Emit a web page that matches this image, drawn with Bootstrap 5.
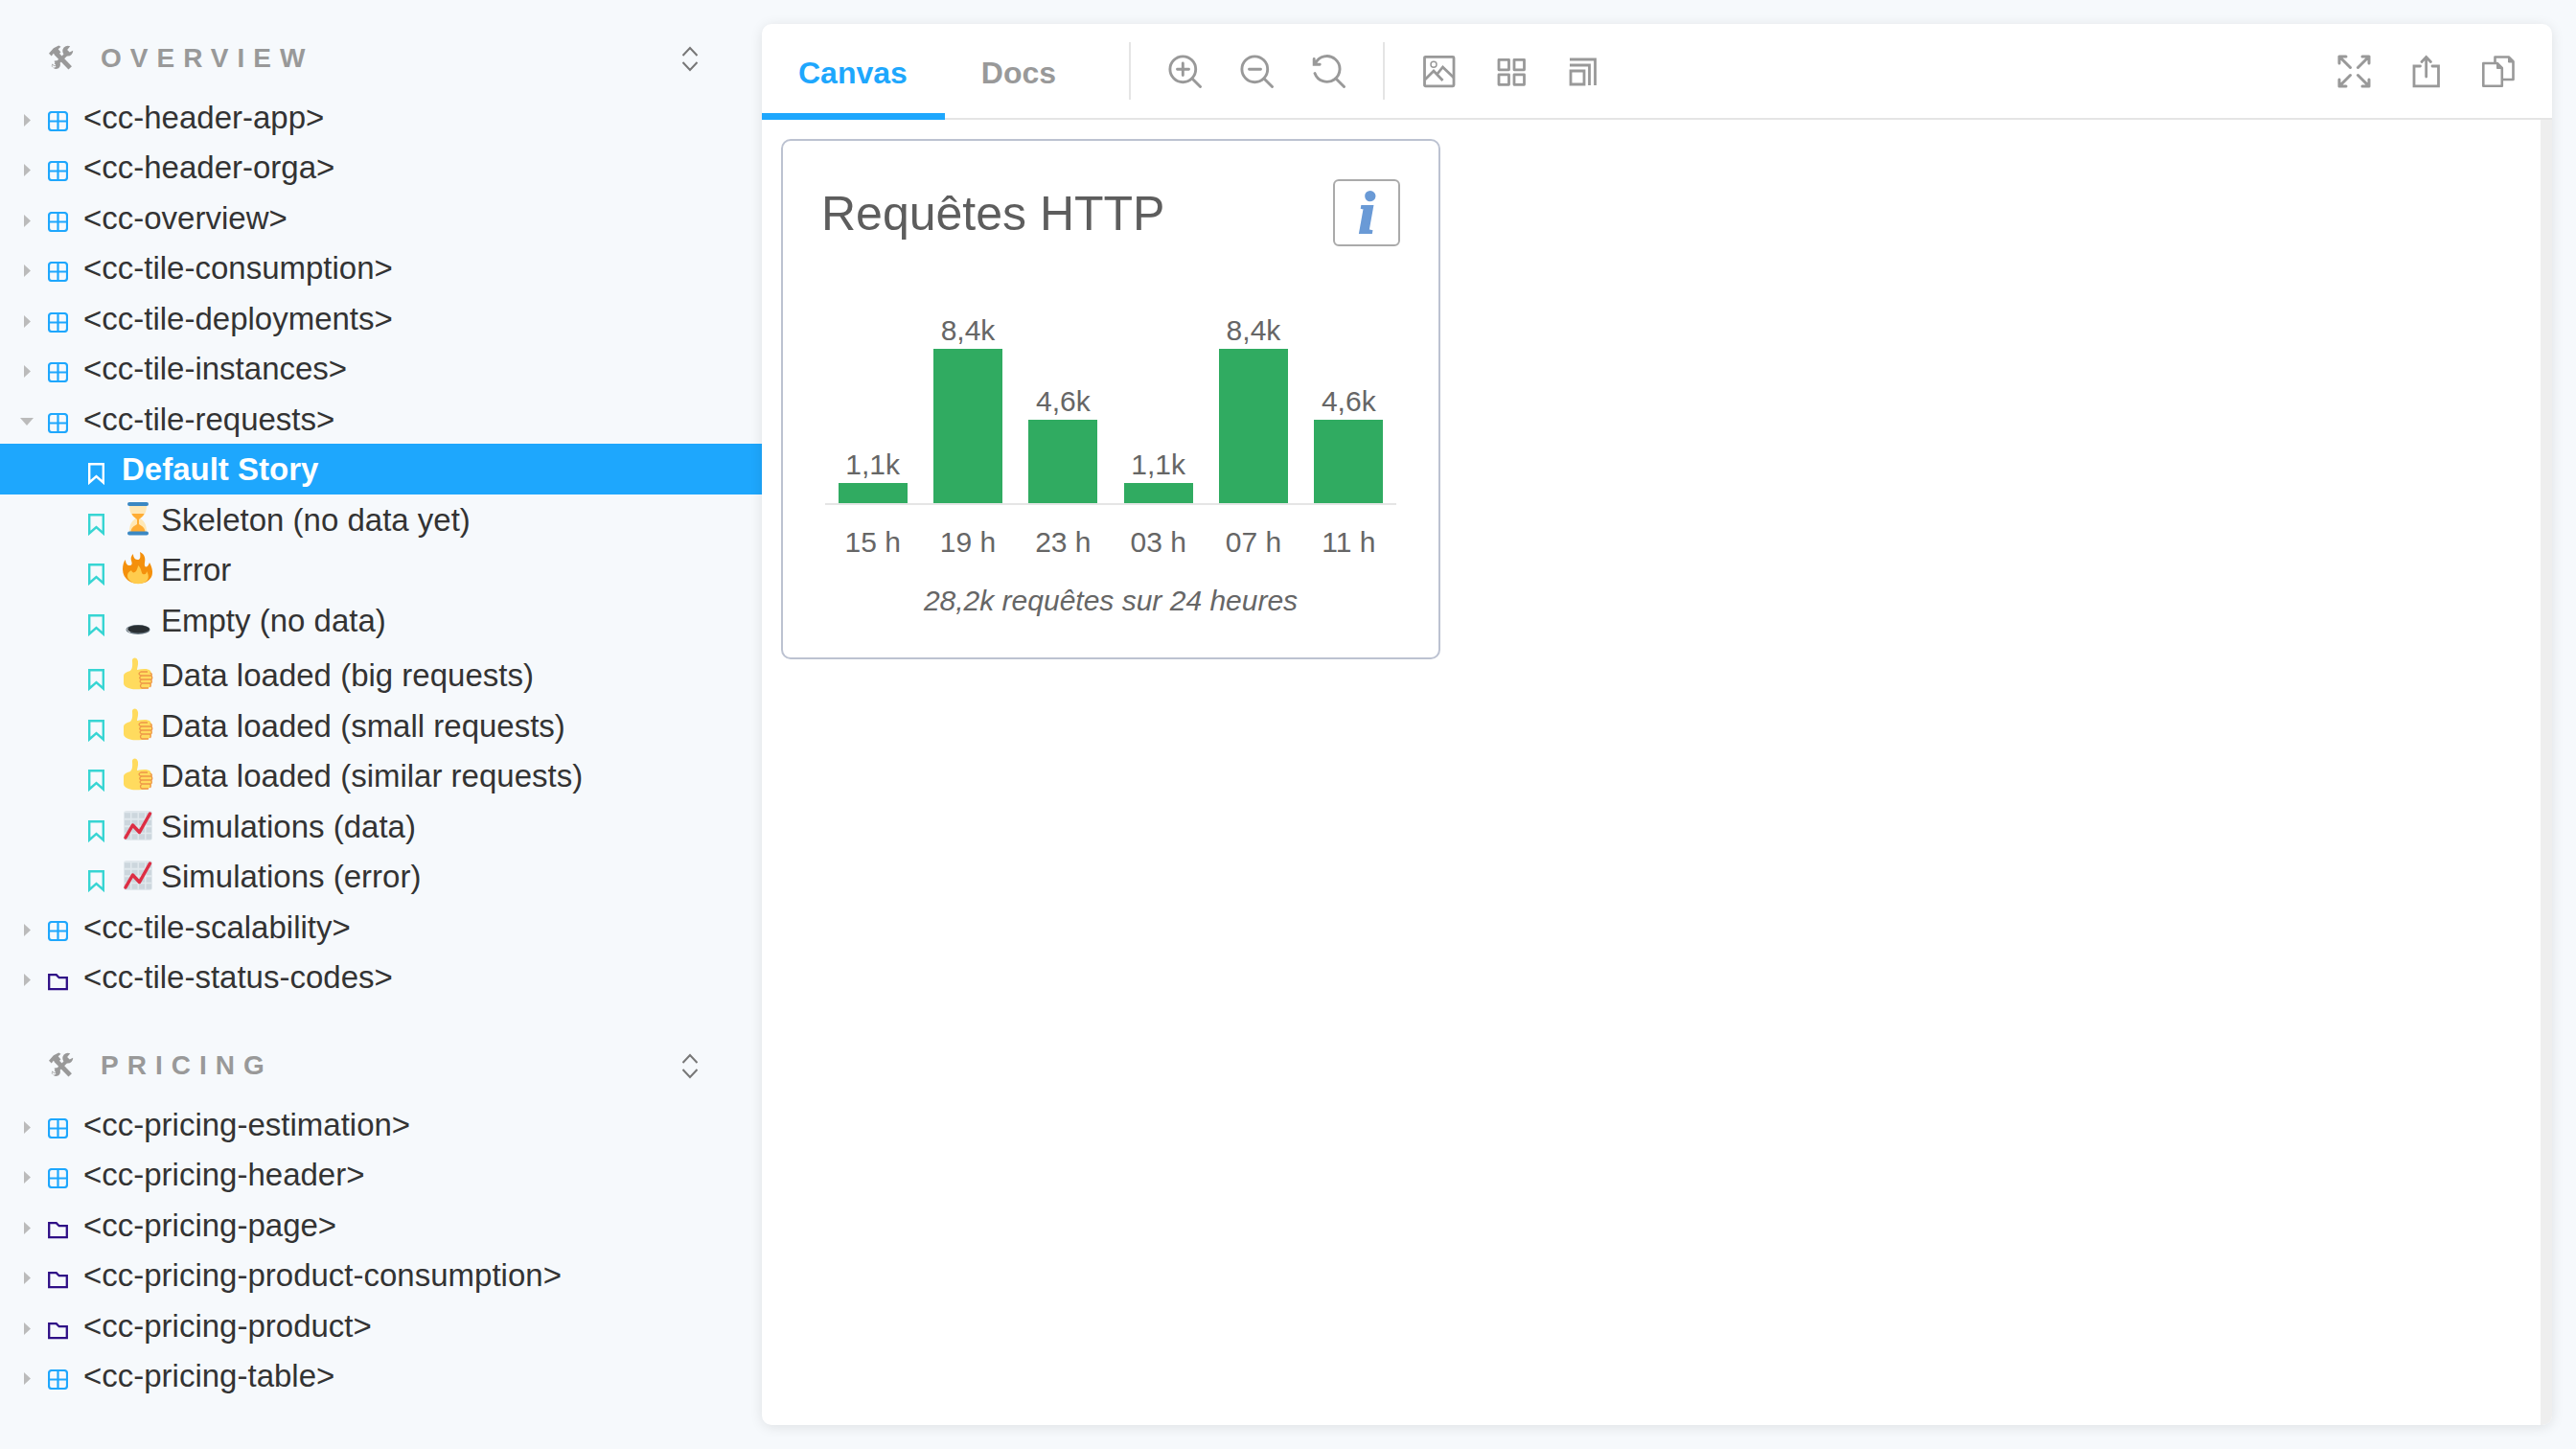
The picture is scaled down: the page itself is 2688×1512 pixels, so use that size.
<!DOCTYPE html>
<html lang="fr">
<head>
<meta charset="utf-8">
<meta name="viewport" content="width=device-width, initial-scale=1">
<title>cc-tile-requests - Default Story</title>
<link href="https://cdn.jsdelivr.net/npm/bootstrap@5.3.0/dist/css/bootstrap.min.css" rel="stylesheet">
<style>
body{font-family:"Liberation Sans",Arial,sans-serif;background:#f6f9fc;color:#333;font-size:33px}
.sidebar{width:795px}
.section-head{height:70px;padding:21px 65px 0 51px;color:#999;font-size:28px;line-height:28px}
.section-head h2{font-size:28px;font-weight:700;letter-spacing:9px;line-height:28px}
.section-top{padding-top:26px}
.section-next{margin-top:31px}
.toggle-all{width:20px;height:28px;color:#777}
.tree-item a{display:flex;align-items:flex-start;height:52px;line-height:54px;color:#333;text-decoration:none;white-space:nowrap;padding-left:20px}
.tree-item:nth-child(even) a{height:53px}
.tree-item.tall a{height:57px}
.tree-item .arrow{width:16px;height:13px;margin:23px 14px 0 0;flex:none}
.tree-item .kind{width:21px;height:21px;margin:20px 16px 0 0;flex:none}
.tree-item.story a{padding-left:92px}
.tree-item.story .kind{width:17px;height:23px;margin-right:18px;color:#37d5d3}
.tree-item.story .emoji{width:32px;height:36px;margin:7px 8px 0 1px;flex:none}
.tree-item.active a{background:#1ea7fd;color:#fff;font-weight:700}
.tree-item.story.active .kind{color:#fff}
.c-blue{color:#1ea7fd}
.c-violet{color:#2f0f86}
.preview{margin:25px 25px 25px 0;background:#fff;border-radius:10px;box-shadow:0 2px 13px rgba(0,0,0,.1)}
.toolbar{height:100px;border-bottom:2px solid #e5e5e5}
.tab-link{height:100px;padding:10px 39px 0 38px;border-bottom:7px solid transparent;color:#999;font-size:32px;font-weight:700;line-height:82px;text-decoration:none}
.tab-link.active{color:#1ea7fd;border-color:#1ea7fd}
.sep{width:2px;height:60px;margin:0 39px;background:#e5e5e5}
.sep-first{margin-left:37px}
.tools{gap:40px}
.tools button{width:35px;height:35px;color:#999}
.tools svg,.toggle-all svg{display:block;width:100%;height:100%}
.end-tools{padding-right:39px}
.stage{padding:20px;border-right:12px solid #eee}
.tile{width:688px;padding:40px;border:2px solid #bcc2d1;border-radius:10px;color:#666;font-size:30px}
.tile h1{font-size:50px;line-height:72px;font-weight:400;color:#5d5d5d}
.info-btn{width:70px;height:70px;border:2px solid #aaa;border-radius:6px;background:#fff;color:#6a9ad6;font:italic 700 62px/62px "Liberation Serif",serif;-webkit-text-stroke:2px #6a9ad6}
.plot{height:228px;margin:38px 4px 0;border-bottom:2px solid #e5e5e5;box-sizing:content-box}
.plot,.ticks,.total{line-height:38px}
.bar{width:72px;background:#30ab61}
.ticks{margin:20px 4px 0}
.total{margin-top:23px}
</style>
<script src="https://cdn.jsdelivr.net/npm/bootstrap@5.3.0/dist/js/bootstrap.bundle.min.js"></script>
</head>
<body class="d-flex vh-100 overflow-hidden">
<svg class="d-none" aria-hidden="true">
<symbol id="right" viewBox="0 0 16 13"><path d="M5 0l7 6.500L5 13z" fill="#bbb"/></symbol>
<symbol id="down" viewBox="0 0 16 13"><path d="M1 2h14L8 10z" fill="#bbb"/></symbol>
<symbol id="component" viewBox="0 0 21 21"><path d="M4 1h13q3 0 3 3v13q0 3-3 3H4q-3 0-3-3V4q0-3 3-3zM10.500 1v19M1 10.500h19" fill="none" stroke="currentColor" stroke-width="2.200"/></symbol>
<symbol id="folder" viewBox="0 0 21 21"><path d="M1.200 4.200h7.500l3 3h8.100v12H1.200z" fill="none" stroke="currentColor" stroke-width="2.300"/></symbol>
<symbol id="bookmark" viewBox="0 0 17 23"><path d="M1.200 1.200h14.600v19.300l-7.300-6.500-7.300 6.500z" fill="none" stroke="currentColor" stroke-width="2.400"/></symbol>
<symbol id="tools" viewBox="0 0 24 24"><path d="M6.500 7.500L20.500 22" stroke="#999" stroke-width="4.500"/><path d="M0 8l4.500-5 5-2.500 2 1-2.500 2.500 2.500 3L7.500 10.500 4.500 8 2.500 10.500z" fill="#999"/><path d="M18 7.500L6.500 19" stroke="#999" stroke-width="3.500"/><path d="M20.500 1.200a5 5 0 1 0 2.700 4L20 7l-2.300-2.300zM5 15.500a4 4 0 1 1-2 3.500l2.500 1.500 1.500-2zM3 18l-.5 2.500 2.500 1.500 2-1" fill="#999"/></symbol>
<symbol id="updown" viewBox="0 0 20 28"><path d="M2.500 11L10 3l7.500 8M2.500 18L10 26l7.500-8" fill="none" stroke="currentColor" stroke-width="2"/></symbol>
<symbol id="hourglass" viewBox="0 0 32 36"><path d="M7 4h18c0 7-2 11-6.500 14C23 21 25 25 25 32H7c0-7 2-11 6.500-14C9 15 7 11 7 4z" fill="#ffe8b6"/><path d="M9.500 13h13c-1 3-4 4-5.500 6v5c3 2 6 3 6.500 8h-15c.5-5 3.500-6 6.500-8v-5c-1.500-2-4.500-3-5.500-6z" fill="#ffac33"/><path d="M7 3h18M7 33.500h18" stroke="#3b88c3" stroke-width="4" stroke-linecap="round"/></symbol>
<symbol id="fire" viewBox="0 0 32 36"><path d="M0 19c0-4 1-8 3-10 0 4 2 6 4 6 3 0 3-2 2-5s0-5 2-7c0 5 3 6 5 6s3-2 2-8c5 2 6 7 5 11-1 6 3 6 5 0 3 5 4 11 2 15-3 5-8 7-14 7S0 30 0 19z" fill="#f4900c"/><path d="M5 26c0-4 3-5 4-6 1 3 3 3 5 1 1-2 2-4 2-6 4 3 3 8 5 9 3 1 4-1 4-3 3 5 2 9-1 11-5 3-11 3-15 0-3-2-4-4-4-6z" fill="#ffcc4d"/></symbol>
<symbol id="hole" viewBox="0 0 32 36"><ellipse cx="16" cy="29" rx="12.500" ry="5" fill="#66757f"/><ellipse cx="16.500" cy="28.500" rx="11.500" ry="4" fill="#292f33"/><path d="M5.500 27.500q-2 2 2.500 4.500" fill="none" stroke="#ddd"/></symbol>
<symbol id="thumb" viewBox="0 0 32 36"><path d="M1 20q0-3 7-5c3-3 2-8 2-11 0-3 5-4 6 1 .5 4-1 7-1 9 5-1 11-2 14 1 2 4 2 12 0 16q-2 3-8 3c-6 0-10 1-15-1Q1 31 1 28z" fill="#ffdb5e"/><path d="M26 16h-7q-4 2 0 4h11M20 20q-4 2-1 4h11M20 24q-4 2 0 4h9M20 28q-3 3 0 5h7M29.500 20q2-2-1-3M30 24q1.500-1.500 0-4M29.500 28q1.500-1.500 0-4M28.500 32q1.500-2 0-4" fill="none" stroke="#ee9547" stroke-width="1.300"/></symbol>
<symbol id="trend" viewBox="0 0 32 36"><rect x="1" y="3" width="30" height="31" rx="3" fill="#e1e8ed"/><path d="M2 8h28M2 15.500h28M2 23h28M2 30h28" stroke="#ccd6dd" stroke-width="5.500" stroke-dasharray="6 1.500"/><path d="M3 31l7.500-13 7 7.500L28.500 6" fill="none" stroke="#dd2e44" stroke-width="3.500" stroke-linecap="round" stroke-linejoin="round"/></symbol>
</svg>

<nav class="sidebar flex-shrink-0" aria-label="Stories">
<section class="section-top">
<div class="section-head d-flex align-items-start">
<svg width="26" height="26" class="flex-shrink-0"><use href="#tools"/></svg>
<h2 class="mb-0 flex-grow-1 ps-4 ms-1">OVERVIEW</h2>
<button type="button" class="btn p-0 border-0 toggle-all" aria-label="Expand all overview"><svg><use href="#updown"/></svg></button>
</div>
<ul class="list-unstyled mb-0">
<li class="tree-item"><a href="#"><svg class="arrow"><use href="#right"/></svg><svg class="kind c-blue"><use href="#component"/></svg>&lt;cc-header-app&gt;</a></li>
<li class="tree-item"><a href="#"><svg class="arrow"><use href="#right"/></svg><svg class="kind c-blue"><use href="#component"/></svg>&lt;cc-header-orga&gt;</a></li>
<li class="tree-item"><a href="#"><svg class="arrow"><use href="#right"/></svg><svg class="kind c-blue"><use href="#component"/></svg>&lt;cc-overview&gt;</a></li>
<li class="tree-item"><a href="#"><svg class="arrow"><use href="#right"/></svg><svg class="kind c-blue"><use href="#component"/></svg>&lt;cc-tile-consumption&gt;</a></li>
<li class="tree-item"><a href="#"><svg class="arrow"><use href="#right"/></svg><svg class="kind c-blue"><use href="#component"/></svg>&lt;cc-tile-deployments&gt;</a></li>
<li class="tree-item"><a href="#"><svg class="arrow"><use href="#right"/></svg><svg class="kind c-blue"><use href="#component"/></svg>&lt;cc-tile-instances&gt;</a></li>
<li class="tree-item"><a href="#"><svg class="arrow"><use href="#down"/></svg><svg class="kind c-blue"><use href="#component"/></svg>&lt;cc-tile-requests&gt;</a></li>
<li class="tree-item story active"><a href="#" aria-current="page"><svg class="kind"><use href="#bookmark"/></svg>Default Story</a></li>
<li class="tree-item story"><a href="#"><svg class="kind"><use href="#bookmark"/></svg><svg class="emoji"><use href="#hourglass"/></svg>Skeleton (no data yet)</a></li>
<li class="tree-item story"><a href="#"><svg class="kind"><use href="#bookmark"/></svg><svg class="emoji"><use href="#fire"/></svg>Error</a></li>
<li class="tree-item story tall"><a href="#"><svg class="kind"><use href="#bookmark"/></svg><svg class="emoji"><use href="#hole"/></svg>Empty (no data)</a></li>
<li class="tree-item story"><a href="#"><svg class="kind"><use href="#bookmark"/></svg><svg class="emoji"><use href="#thumb"/></svg>Data loaded (big requests)</a></li>
<li class="tree-item story"><a href="#"><svg class="kind"><use href="#bookmark"/></svg><svg class="emoji"><use href="#thumb"/></svg>Data loaded (small requests)</a></li>
<li class="tree-item story"><a href="#"><svg class="kind"><use href="#bookmark"/></svg><svg class="emoji"><use href="#thumb"/></svg>Data loaded (similar requests)</a></li>
<li class="tree-item story"><a href="#"><svg class="kind"><use href="#bookmark"/></svg><svg class="emoji"><use href="#trend"/></svg>Simulations (data)</a></li>
<li class="tree-item story"><a href="#"><svg class="kind"><use href="#bookmark"/></svg><svg class="emoji"><use href="#trend"/></svg>Simulations (error)</a></li>
<li class="tree-item"><a href="#"><svg class="arrow"><use href="#right"/></svg><svg class="kind c-blue"><use href="#component"/></svg>&lt;cc-tile-scalability&gt;</a></li>
<li class="tree-item"><a href="#"><svg class="arrow"><use href="#right"/></svg><svg class="kind c-violet"><use href="#folder"/></svg>&lt;cc-tile-status-codes&gt;</a></li>
</ul>
</section>
<section class="section-next">
<div class="section-head d-flex align-items-start">
<svg width="26" height="26" class="flex-shrink-0"><use href="#tools"/></svg>
<h2 class="mb-0 flex-grow-1 ps-4 ms-1">PRICING</h2>
<button type="button" class="btn p-0 border-0 toggle-all" aria-label="Expand all pricing"><svg><use href="#updown"/></svg></button>
</div>
<ul class="list-unstyled mb-0">
<li class="tree-item"><a href="#"><svg class="arrow"><use href="#right"/></svg><svg class="kind c-blue"><use href="#component"/></svg>&lt;cc-pricing-estimation&gt;</a></li>
<li class="tree-item"><a href="#"><svg class="arrow"><use href="#right"/></svg><svg class="kind c-blue"><use href="#component"/></svg>&lt;cc-pricing-header&gt;</a></li>
<li class="tree-item"><a href="#"><svg class="arrow"><use href="#right"/></svg><svg class="kind c-violet"><use href="#folder"/></svg>&lt;cc-pricing-page&gt;</a></li>
<li class="tree-item"><a href="#"><svg class="arrow"><use href="#right"/></svg><svg class="kind c-violet"><use href="#folder"/></svg>&lt;cc-pricing-product-consumption&gt;</a></li>
<li class="tree-item"><a href="#"><svg class="arrow"><use href="#right"/></svg><svg class="kind c-violet"><use href="#folder"/></svg>&lt;cc-pricing-product&gt;</a></li>
<li class="tree-item"><a href="#"><svg class="arrow"><use href="#right"/></svg><svg class="kind c-blue"><use href="#component"/></svg>&lt;cc-pricing-table&gt;</a></li>
</ul>
</section>
</nav>

<main class="preview d-flex flex-column flex-grow-1 overflow-hidden">
<div class="toolbar d-flex align-items-center flex-shrink-0">
<div class="d-flex align-self-start">
<a class="tab-link active" href="#" aria-current="page">Canvas</a>
<a class="tab-link" href="#">Docs</a>
</div>
<div class="sep sep-first"></div>
<div class="tools d-flex">
<button type="button" class="btn p-0 border-0" aria-label="Zoom in"><svg viewBox="0 0 35 35" fill="none" stroke="currentColor" stroke-width="2.900" stroke-linecap="round"><circle cx="15.300" cy="15.300" r="13.400"/><path d="M25 25l8.500 8.500M9.500 15.300h12M15.300 9v12.500"/></svg></button>
<button type="button" class="btn p-0 border-0" aria-label="Zoom out"><svg viewBox="0 0 35 35" fill="none" stroke="currentColor" stroke-width="2.900" stroke-linecap="round"><circle cx="15.300" cy="15.300" r="13.400"/><path d="M25 25l8.500 8.500M9.500 15.300h12"/></svg></button>
<button type="button" class="btn p-0 border-0" aria-label="Reset zoom"><svg viewBox="0 0 35 35" fill="none" stroke="currentColor" stroke-width="2.900" stroke-linecap="round"><path d="M3 19.500A13.400 13.400 0 1 0 3.500 9.200M2.200 4.500v5.800h6M25 25l8.500 8.500"/></svg></button>
</div>
<div class="sep"></div>
<div class="tools d-flex">
<button type="button" class="btn p-0 border-0" aria-label="Background"><svg viewBox="0 0 35 35" fill="none" stroke="currentColor" stroke-width="2.800"><rect x="2.500" y="2.300" width="30.500" height="30.500" rx="1"/><circle cx="12" cy="10.300" r="3" stroke-width="1.500"/><path d="M3 26l9-9 9.500 10M15.500 20.500l6-7.500L33 24"/></svg></button>
<button type="button" class="btn p-0 border-0" aria-label="Grid"><svg viewBox="0 0 35 35" fill="none" stroke="currentColor" stroke-width="2.800"><path d="M5 5.300h10.500v10.500H5zM21 5.300h10.500v10.500H21zM5 20.800h10.500v10.500H5zM21 20.800h10.500v10.500H21z" stroke-linejoin="round"/></svg></button>
<button type="button" class="btn p-0 border-0" aria-label="Viewport"><svg viewBox="0 0 35 35" fill="none" stroke="currentColor" stroke-width="2.800"><path d="M4 5h26.500v27M4 11h20.500v21M5 17h14v14H5z"/></svg></button>
</div>
<div class="tools end-tools d-flex ms-auto">
<button type="button" class="btn p-0 border-0" aria-label="Full screen"><svg viewBox="0 0 35 35" fill="none" stroke="currentColor" stroke-width="3" stroke-linecap="round" stroke-linejoin="round"><path d="M2 9V2h7M2 2l11.500 11.500M26 2h7v7M33 2L21.500 13.500M2 26v7h7M2 33l11.500-11.500M26 33h7v-7M33 33L21.500 21.500"/></svg></button>
<button type="button" class="btn p-0 border-0" aria-label="Open in new tab"><svg viewBox="0 0 35 35" fill="none" stroke="currentColor" stroke-width="2.800" stroke-linecap="round"><path d="M11.500 12H5v20.800h25.500V12H24M17.700 23V3M13 7.500l4.700-5 4.700 5"/></svg></button>
<button type="button" class="btn p-0 border-0" aria-label="Copy link"><svg viewBox="0 0 35 35" fill="none" stroke="currentColor" stroke-width="2.600" stroke-linejoin="round"><path d="M2.300 9h14.500l5 5v18.700H2.300zM14.500 8.500V2.500h14.300l4.700 4.700V26H22"/><path d="M16.500 9v5.500h5.500zM28.500 2.500V8H34z" fill="currentColor" stroke-width="1"/></svg></button>
</div>
</div>
<div class="stage flex-grow-1">
<article class="tile">
<div class="d-flex justify-content-between">
<h1 class="mb-0">Requêtes HTTP</h1>
<button type="button" class="info-btn p-0" aria-label="Informations">i</button>
</div>
<div class="plot d-flex align-items-end text-center">
<div class="flex-fill w-100"><div>1,1k</div><div class="bar mx-auto" style="height:21px"></div></div>
<div class="flex-fill w-100"><div>8,4k</div><div class="bar mx-auto" style="height:161px"></div></div>
<div class="flex-fill w-100"><div>4,6k</div><div class="bar mx-auto" style="height:87px"></div></div>
<div class="flex-fill w-100"><div>1,1k</div><div class="bar mx-auto" style="height:21px"></div></div>
<div class="flex-fill w-100"><div>8,4k</div><div class="bar mx-auto" style="height:161px"></div></div>
<div class="flex-fill w-100"><div>4,6k</div><div class="bar mx-auto" style="height:87px"></div></div>
</div>
<div class="ticks d-flex text-center">
<div class="flex-fill w-100">15 h</div><div class="flex-fill w-100">19 h</div><div class="flex-fill w-100">23 h</div><div class="flex-fill w-100">03 h</div><div class="flex-fill w-100">07 h</div><div class="flex-fill w-100">11 h</div>
</div>
<p class="total mb-0 text-center fst-italic">28,2k requêtes sur 24 heures</p>
</article>
</div>
</main>
</body>
</html>
